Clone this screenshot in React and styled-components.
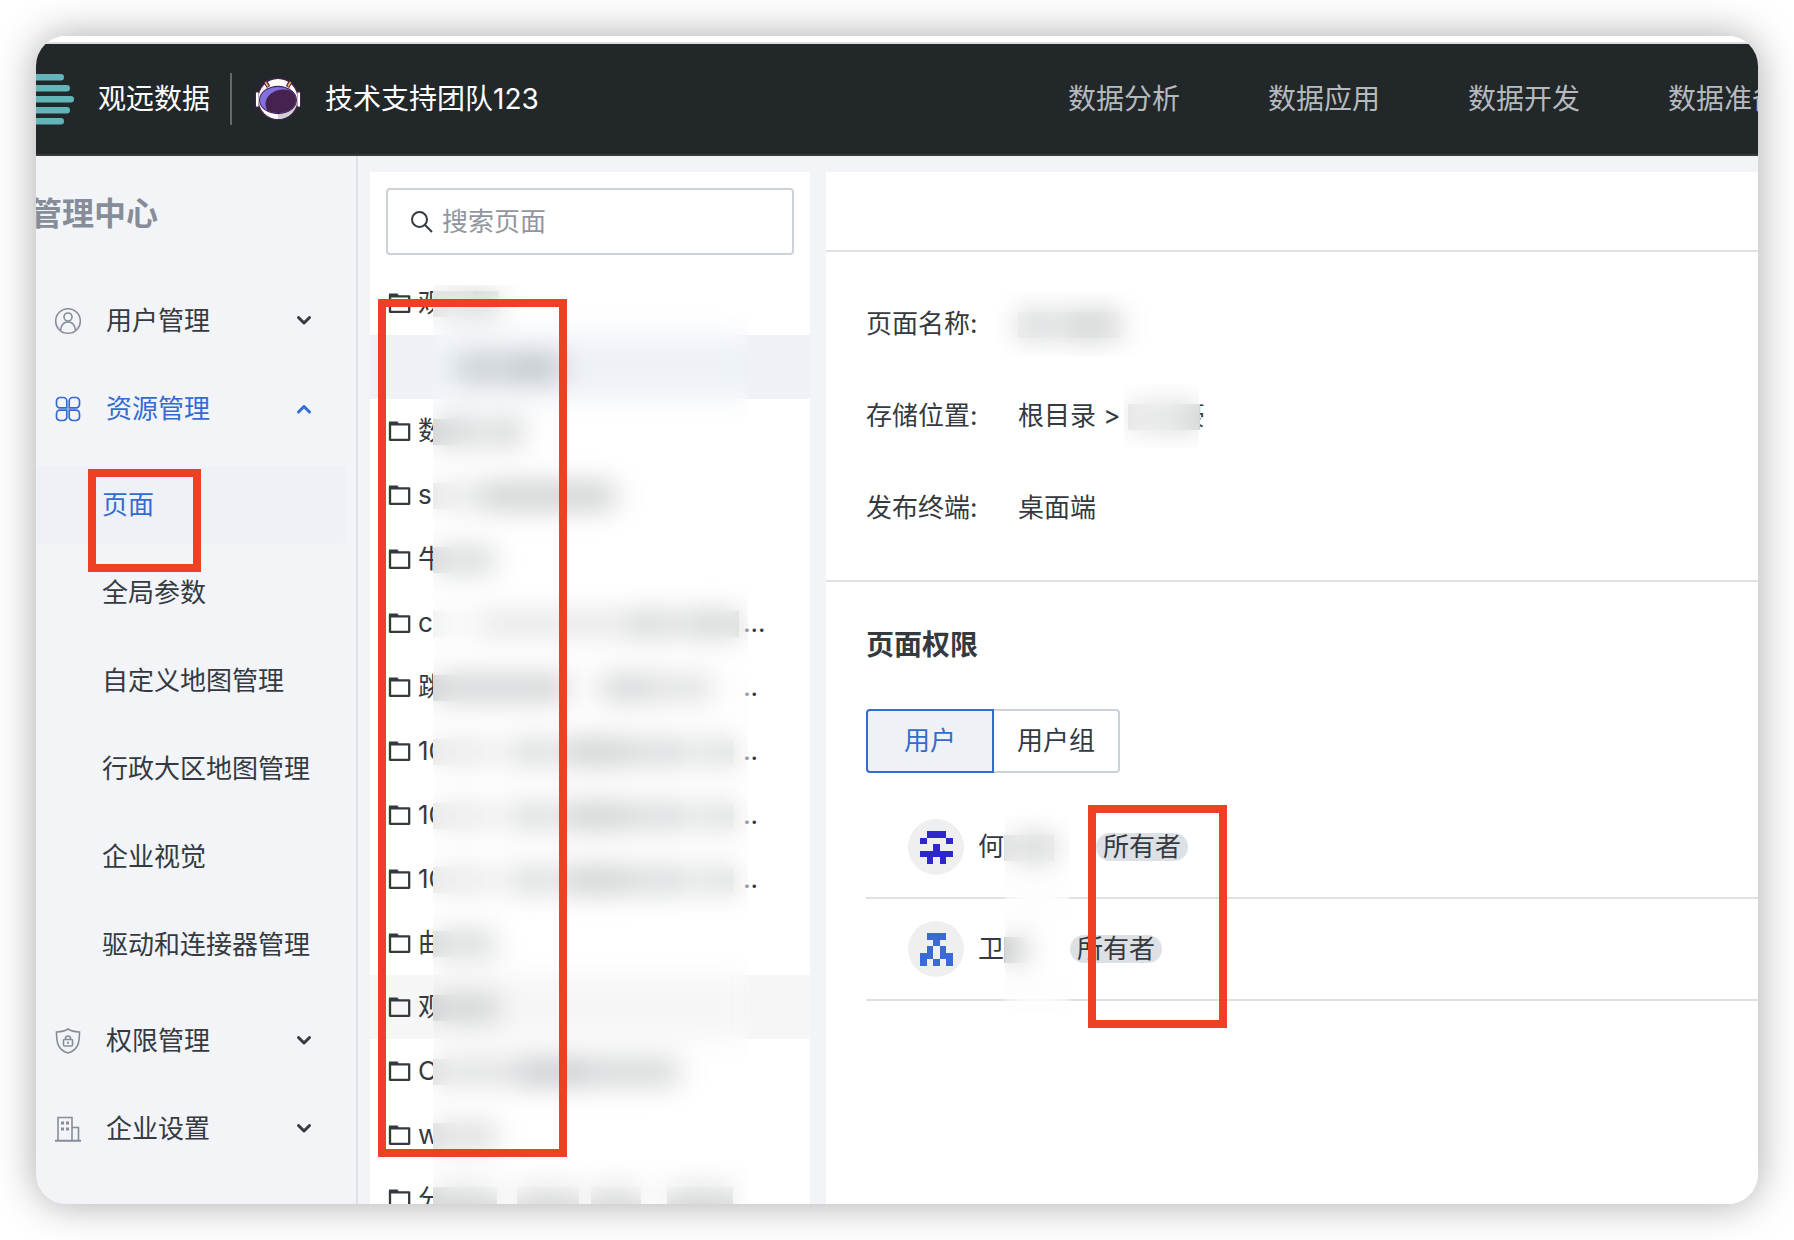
import React, {useState} from 'react';
import styled, {createGlobalStyle} from 'styled-components';

const GlobalStyle = createGlobalStyle`
  * {
    box-sizing: border-box;
  }
  body {
    margin: 0;
    background: #ffffff;
    color: #343a3f;
    font-family: Inter, "Noto Sans CJK SC", sans-serif;
    font-size: 26px;
    line-height: 40px;
  }
  button, input {
    font: inherit;
    color: inherit;
  }
  ul {
    list-style: none;
    margin: 0;
    padding: 0;
  }
`;

const Desktop = styled.div`
  height: 100vh;
  padding: 36px;
`;

const Window = styled.div`
  height: 100%;
  display: flex;
  flex-direction: column;
  overflow: hidden;
  position: relative;
  border-radius: 30px;
  background: #f2f4f8;
  box-shadow: 0 0 40px rgba(0, 0, 0, 0.34);
`;

const TopEdge = styled.div`
  flex: none;
  height: 8px;
  background: #ffffff;
  border-bottom: 2px solid #dddfe1;
`;

const Header = styled.header`
  flex: none;
  height: 112px;
  display: flex;
  align-items: center;
  justify-content: space-between;
  background: #22272a;
  border-bottom: 2px solid #3a3a3a;
  color: #ffffff;
  font-size: 28px;
  white-space: nowrap;
`;

const Brand = styled.div`
  display: flex;
  align-items: center;
  svg {
    flex: none;
  }
  .name {
    margin-left: 24px;
    padding-right: 20px;
  }
  .team {
    margin-left: 23px;
  }
`;

const Divider = styled.span`
  width: 2px;
  height: 52px;
  margin-right: 22px;
  background: #64686b;
`;

const Nav = styled.nav`
  display: flex;
  gap: 88px;
  margin-right: -22px;
  a {
    color: #b5babd;
    text-decoration: none;
  }
`;

const Body = styled.div`
  flex: 1;
  min-height: 0;
  display: flex;
`;

const Sidebar = styled.aside`
  flex: none;
  width: 322px;
  border-right: 2px solid #dfe1e6;
  overflow: hidden;
  h1 {
    margin: 38px 0 43px -6px;
    font-size: 32px;
    line-height: 40px;
    font-weight: 700;
    color: #868d98;
  }
`;

const MenuButton = styled.button`
  width: 100%;
  height: 88px;
  display: flex;
  align-items: center;
  padding: 0 44px 0 18px;
  border: none;
  background: none;
  text-align: left;
  cursor: pointer;
  color: ${props => props.$open ? '#346bd0' : '#343a3f'};
  .icon {
    flex: none;
    margin-right: 24px;
    color: ${props => props.$open ? '#346bd0' : '#868d98'};
  }
  .label {
    flex: 1;
  }
`;

const SubMenu = styled.ul`
  padding: 8px 0;
  li {
    padding: 5px 10px 5px 0;
  }
  a {
    display: block;
    height: 78px;
    padding-left: 66px;
    border-radius: 4px;
    line-height: 78px;
    color: inherit;
    text-decoration: none;
  }
  a.active {
    color: #346bd0;
    background: #eef2f7;
  }
`;

const TreePanel = styled.section`
  flex: none;
  width: 440px;
  margin: 16px 16px 0 12px;
  background: #ffffff;
  overflow: hidden;
`;

const SearchBox = styled.label`
  height: 67px;
  display: flex;
  align-items: center;
  margin: 16px 16px;
  padding-left: 23px;
  gap: 9px;
  border: 2px solid #cdd2d8;
  border-radius: 4px;
  input {
    flex: 1;
    min-width: 0;
    border: none;
    padding: 0;
    background: none;
    outline: none;
  }
  input::placeholder {
    color: #91969e;
    opacity: 1;
  }
`;

const TreeList = styled.div`
  position: relative;
`;

const TreeRow = styled.li`
  height: 64px;
  display: flex;
  align-items: center;
  padding-left: 18px;
  background: ${props => props.$background || 'transparent'};
  svg {
    flex: none;
    margin-right: 7px;
  }
  .text {
    flex: none;
    width: 15px;
    overflow: hidden;
    white-space: nowrap;
  }
  .dots {
    white-space: nowrap;
  }
`;

const Strip = styled.span`
  position: relative;
  flex: none;
  width: 310px;
  height: 26px;
`;

const Bar = styled.span`
  position: absolute;
  top: 1px;
  height: 26px;
  background: #343a3f;
`;

// frosted layer that softens whatever lies below it
const Frost = styled.div`
  position: absolute;
  backdrop-filter: blur(14px);
`;

const TreeFrost = styled(Frost)`
  left: 63px;
  top: 14px;
  bottom: 0;
  width: 315px;
`;

const Detail = styled.main`
  flex: 1;
  min-width: 0;
  margin-top: 16px;
  background: #ffffff;
`;

const DetailHead = styled.div`
  height: 80px;
  border-bottom: 2px solid #dfe1e6;
`;

const Fields = styled.dl`
  margin: 0;
  padding: 52px 40px;
  display: flex;
  flex-direction: column;
  gap: 52px;
  border-bottom: 2px solid #dfe1e6;
  div {
    display: flex;
  }
  dt {
    width: 152px;
  }
  dd {
    margin: 0;
    display: flex;
    align-items: center;
    position: relative;
    white-space: pre;
  }
  .tail {
    width: 5px;
    display: flex;
    justify-content: flex-end;
    overflow: hidden;
  }
`;

const HiddenName = styled.span`
  position: relative;
  width: ${props => props.$width}px;
  height: 26px;
`;

const FieldFrost = styled(Frost)`
  left: ${props => props.$left}px;
  top: -12px;
  width: ${props => props.$width}px;
  height: 64px;
`;

const Permissions = styled.section`
  padding-left: 40px;
  h2 {
    margin: 43px 0 44px;
    font-size: 28px;
    line-height: 40px;
    font-weight: 700;
  }
`;

const Tabs = styled.div`
  display: flex;
  margin-bottom: 24px;
`;

const Tab = styled.button`
  width: 128px;
  height: 64px;
  padding: 0;
  cursor: pointer;
  position: relative;
  z-index: ${props => props.$active ? 1 : 0};
  border: 2px solid ${props => props.$active ? '#346bd0' : '#cdd2d8'};
  border-radius: ${props => props.$first ? '4px 0 0 4px' : '0 4px 4px 0'};
  margin-left: ${props => props.$first ? 0 : '-2px'};
  color: ${props => props.$active ? '#346bd0' : '#343a3f'};
  background: ${props => props.$active ? '#eef2f7' : '#ffffff'};
`;

const Users = styled.div`
  position: relative;
`;

const UserRow = styled.li`
  height: 102px;
  display: flex;
  align-items: center;
  padding-left: 42px;
  border-bottom: 2px solid #dfe1e6;
`;

const Avatar = styled.span`
  width: 56px;
  height: 56px;
  margin-right: 14px;
  display: flex;
  align-items: center;
  justify-content: center;
  border-radius: 50%;
  background: #efefef;
`;

const Tag = styled.span`
  height: 28px;
  margin-left: 40px;
  padding: 0 7px;
  border-radius: 14px;
  line-height: 28px;
  background: #dde1e6;
`;

const UserFrost = styled(Frost)`
  left: 139px;
  top: 18px;
  width: 65px;
  height: 198px;
`;

const Mark = styled.div`
  position: absolute;
  z-index: 2;
  pointer-events: none;
  border: 8px solid #ee4023;
  left: ${props => props.$left}px;
  top: ${props => props.$top}px;
  width: ${props => props.$width}px;
  height: ${props => props.$height}px;
`;

function Logo() {
    return <svg width="38" height="52" viewBox="0 0 38 52" fill="#62b5b8">
        <rect x="-10" y="1" width="38" height="6.400" rx="3.200"/>
        <rect x="-10" y="12" width="44" height="6.400" rx="3.200"/>
        <rect x="-10" y="23" width="48" height="6.400" rx="3.200"/>
        <rect x="-10" y="34" width="44" height="6.400" rx="3.200"/>
        <rect x="-10" y="45" width="38" height="6.400" rx="3.200"/>
    </svg>;
}

function Helmet() {
    return <svg width="48" height="44" viewBox="0 0 48 44">
        <clipPath id="visor"><ellipse cx="24" cy="23" rx="18" ry="13"/></clipPath>
        <rect x="1" y="14" width="46" height="17" rx="4" fill="#46224f"/>
        <ellipse cx="24" cy="22" rx="21" ry="21.500" fill="#46224f"/>
        <rect x="2" y="15.500" width="2.500" height="14" fill="#ffffff"/>
        <rect x="43.500" y="15.500" width="2.500" height="14" fill="#ffffff"/>
        <ellipse cx="24" cy="22" rx="19.500" ry="20" fill="#ffffff"/>
        <path d="M24 42 C33 41.500 40 36 42.500 28 L36 33 L24 36 Z" fill="#d3d0d4"/>
        <path d="M11 4 L14.500 10 M37 4 L33.500 10" stroke="#46224f" strokeWidth="4"/>
        <path d="M11.500 5 L14 9.500 M36.500 5 L34 9.500" stroke="#e8b25c" strokeWidth="1.800"/>
        <ellipse cx="24" cy="23" rx="19" ry="14.200" fill="#46224f"/>
        <ellipse cx="24" cy="23" rx="18" ry="13" fill="#8370df"/>
        <ellipse cx="29.500" cy="27" rx="18" ry="14.500" fill="#46224f" clipPath="url(#visor)"/>
    </svg>;
}

const icons = {
    user: <>
        <circle cx="13" cy="13" r="12.300"/>
        <circle cx="13" cy="9" r="4"/>
        <path d="M5.500 22.500 C6 17 8.500 14 13 14 S20 17 20.500 22.500"/>
    </>,
    grid: <g strokeWidth="1.700">
        <path d="M11.800 11.800 H5 A3.500 3.500 0 0 1 1.500 8.300 V5 A3.500 3.500 0 0 1 5 1.500 H8.300 A3.500 3.500 0 0 1 11.800 5 Z"/>
        <path d="M14.200 11.800 H21 A3.500 3.500 0 0 0 24.500 8.300 V5 A3.500 3.500 0 0 0 21 1.500 H17.700 A3.500 3.500 0 0 0 14.200 5 Z"/>
        <path d="M11.800 14.200 H5 A3.500 3.500 0 0 0 1.500 17.700 V21 A3.500 3.500 0 0 0 5 24.500 H8.300 A3.500 3.500 0 0 0 11.800 21 Z"/>
        <path d="M14.200 14.200 H21 A3.500 3.500 0 0 1 24.500 17.700 V21 A3.500 3.500 0 0 1 21 24.500 H17.700 A3.500 3.500 0 0 1 14.200 21 Z"/>
    </g>,
    shield: <>
        <path d="M13 1 C10 3 6 3.800 1.500 4 C1.500 14 2.500 22 13 25 C23.500 22 24.500 14 24.500 4 C20 3.800 16 3 13 1 Z"/>
        <rect x="8.500" y="11.500" width="9" height="6.500" rx="1"/>
        <path d="M10.500 11.500 V10.500 A2.500 2.500 0 0 1 15.500 10.500 V11.500 M13 13.500 V16"/>
    </>,
    building: <>
        <path d="M3 25 V1.500 H17 V25 M17 11.500 H23.500 V25"/>
        <path d="M0 24.800 H26" strokeWidth="2"/>
        <path d="M6 7 H9 M11 7 H14 M6 13 H9 M11 13 H14" strokeWidth="3"/>
    </>,
    circle: <circle cx="13" cy="13" r="12.300"/>,
};

function MenuIcon({name}) {
    return <svg className="icon" width="28" height="28" viewBox="-1 -1 28 28" fill="none"
                stroke="currentColor" strokeWidth="1.600">
        {icons[name]}
    </svg>;
}

function Chevron({up}) {
    return <svg width="16" height="12" viewBox="0 0 16 12" fill="none" stroke="currentColor"
                strokeWidth="3" strokeLinecap="round" strokeLinejoin="round">
        <path d={up ? 'M2.500 9 L8 3.500 L13.500 9' : 'M2.500 2.500 L8 8 L13.500 2.500'}/>
    </svg>;
}

function Folder() {
    return <svg width="23" height="22" viewBox="0 0 23 22">
        <path d="M1 1.500 H9.500 L11.500 4.500 H1 Z" fill="#343a3f"/>
        <path d="M2 2.500 V19.800 H21.200 V4.300 H2" fill="none" stroke="#343a3f" strokeWidth="2.300"
              strokeLinejoin="round"/>
    </svg>;
}

const identicons = [
    {color: '#2e26cf', cells: ['01110', '10001', '00100', '11111', '01010']},
    {color: '#3a6bd5', cells: ['01110', '00100', '01010', '11011', '10101']},
];

function Identicon({color, cells}) {
    return <svg width="33" height="33" viewBox="0 0 5 5" fill={color} shapeRendering="crispEdges">
        {cells.map((line, y) => line.split('').map((cell, x) => cell === '1'
            ? <rect key={`${x}-${y}`} x={x} y={y} width="1" height="1"/>
            : null))}
    </svg>;
}

const navItems = ['数据分析', '数据应用', '数据开发', '数据准备'];

const subItems = ['页面', '全局参数', '自定义地图管理', '行政大区地图管理', '企业视觉', '驱动和连接器管理'];

// bars: [left, width, opacity]
const numbered = [[0, 56, 0.12], [56, 24, 0.06], [80, 32, 0.2], [112, 20, 0.12], [132, 60, 0.26], [192, 64, 0.2], [256, 22, 0.1], [278, 22, 0.24]];

const folders = [
    {text: '观', bars: [[0, 40, 0.16], [40, 26, 0.22]]},
    {text: '', selected: true, bars: [[26, 26, 0.24], [52, 22, 0.16], [74, 54, 0.26]]},
    {text: '数', bars: [[0, 44, 0.24], [44, 20, 0.14], [64, 26, 0.24]]},
    {text: 'su', bars: [[0, 50, 0.12], [50, 132, 0.26]]},
    {text: '牛', bars: [[0, 62, 0.2]]},
    {text: 'c', bars: [[0, 24, 0.08], [42, 154, 0.12], [196, 36, 0.22], [232, 28, 0.16], [260, 46, 0.24]], dots: '...'},
    {text: '跳', bars: [[0, 136, 0.24], [166, 54, 0.22], [220, 60, 0.16]], dots: '..'},
    {text: '10', bars: numbered, dots: '..'},
    {text: '10', bars: numbered, dots: '..'},
    {text: '10', bars: numbered, dots: '..'},
    {text: '曲', bars: [[0, 62, 0.2]]},
    {text: '观', hover: true, bars: [[0, 66, 0.2]]},
    {text: 'C', bars: [[0, 86, 0.16], [86, 70, 0.28], [156, 90, 0.22]]},
    {text: 'w', bars: [[0, 64, 0.18]]},
    {text: '分', bars: [[0, 64, 0.2], [84, 62, 0.18], [158, 50, 0.18], [234, 66, 0.2]]},
];

function Bars({bars}) {
    return bars.map(([left, width, opacity]) => <Bar key={left} style={{left, width, opacity}}/>);
}

function MenuGroup({icon, label, open}) {
    return <MenuButton type="button" $open={open} aria-expanded={!!open}>
        <MenuIcon name={icon}/>
        <span className="label">{label}</span>
        <Chevron up={open}/>
    </MenuButton>;
}

function rowBackground({selected, hover}) {
    if (selected) return '#eef2f7';
    return hover ? '#f6f6f6' : undefined;
}

export default function App() {
    const [keyword, setKeyword] = useState('');
    const [tab, setTab] = useState('用户');

    return <Desktop>
        <GlobalStyle/>
        <Window>
            <TopEdge/>
            <Header>
                <Brand>
                    <Logo/>
                    <span className="name">观远数据</span>
                    <Divider/>
                    <Helmet/>
                    <span className="team">技术支持团队123</span>
                </Brand>
                <Nav>
                    {navItems.map(item => <a key={item} href="#">{item}</a>)}
                </Nav>
            </Header>
            <Body>
                <Sidebar>
                    <h1>管理中心</h1>
                    <MenuGroup icon="user" label="用户管理"/>
                    <MenuGroup icon="grid" label="资源管理" open/>
                    <SubMenu>
                        {subItems.map((item, index) => <li key={item}>
                            <a href="#" className={index === 0 ? 'active' : ''}>{item}</a>
                        </li>)}
                    </SubMenu>
                    <MenuGroup icon="shield" label="权限管理"/>
                    <MenuGroup icon="building" label="企业设置"/>
                    <MenuGroup icon="circle"/>
                </Sidebar>
                <TreePanel>
                    <SearchBox>
                        <svg width="22" height="22" viewBox="0 0 22 22" fill="none" stroke="#343a3f" strokeWidth="2">
                            <circle cx="8.500" cy="8.500" r="7.500"/>
                            <path d="M14 14 L21 21"/>
                        </svg>
                        <input placeholder="搜索页面"
                               aria-label="搜索页面"
                               value={keyword}
                               onChange={event => setKeyword(event.target.value)}/>
                    </SearchBox>
                    <TreeList>
                        <ul>
                            {folders.map((folder, index) => <TreeRow key={index} $background={rowBackground(folder)}>
                                {folder.selected ? <svg width="23" height="22"/> : <Folder/>}
                                <span className="text">{folder.text}</span>
                                <Strip><Bars bars={folder.bars}/></Strip>
                                <span className="dots">{folder.dots}</span>
                            </TreeRow>)}
                        </ul>
                        <TreeFrost/>
                    </TreeList>
                </TreePanel>
                <Detail>
                    <DetailHead/>
                    <Fields>
                        <div>
                            <dt>页面名称:</dt>
                            <dd>
                                <HiddenName $width={104}>
                                    <Bars bars={[[0, 26, 0.24], [26, 22, 0.16], [48, 54, 0.26]]}/>
                                </HiddenName>
                                <FieldFrost $left={-20} $width={150}/>
                            </dd>
                        </div>
                        <div>
                            <dt>存储位置:</dt>
                            <dd>
                                {'根目录 > '}
                                <HiddenName $width={72}><Bars bars={[[0, 46, 0.16], [46, 26, 0.22]]}/></HiddenName>
                                <span className="tail">豪</span>
                                <FieldFrost $left={106} $width={75}/>
                            </dd>
                        </div>
                        <div>
                            <dt>发布终端:</dt>
                            <dd>桌面端</dd>
                        </div>
                    </Fields>
                    <Permissions>
                        <h2>页面权限</h2>
                        <Tabs>
                            {['用户', '用户组'].map((item, index) => <Tab key={item}
                                                                       type="button"
                                                                       $first={index === 0}
                                                                       $active={tab === item}
                                                                       onClick={() => setTab(item)}>{item}</Tab>)}
                        </Tabs>
                        <Users>
                            <ul>
                                <UserRow>
                                    <Avatar><Identicon {...identicons[0]}/></Avatar>
                                    何
                                    <HiddenName $width={52}>
                                        <Bars bars={[[0, 24, 0.16], [24, 26, 0.26]]}/>
                                    </HiddenName>
                                    <Tag>所有者</Tag>
                                </UserRow>
                                <UserRow>
                                    <Avatar><Identicon {...identicons[1]}/></Avatar>
                                    卫
                                    <HiddenName $width={26}><Bars bars={[[0, 24, 0.26]]}/></HiddenName>
                                    <Tag>所有者</Tag>
                                </UserRow>
                            </ul>
                            <UserFrost/>
                        </Users>
                    </Permissions>
                </Detail>
            </Body>
            <Mark $left={52} $top={433} $width={113} $height={103}/>
            <Mark $left={342} $top={263} $width={189} $height={858}/>
            <Mark $left={1052} $top={769} $width={139} $height={223}/>
        </Window>
    </Desktop>;
}
